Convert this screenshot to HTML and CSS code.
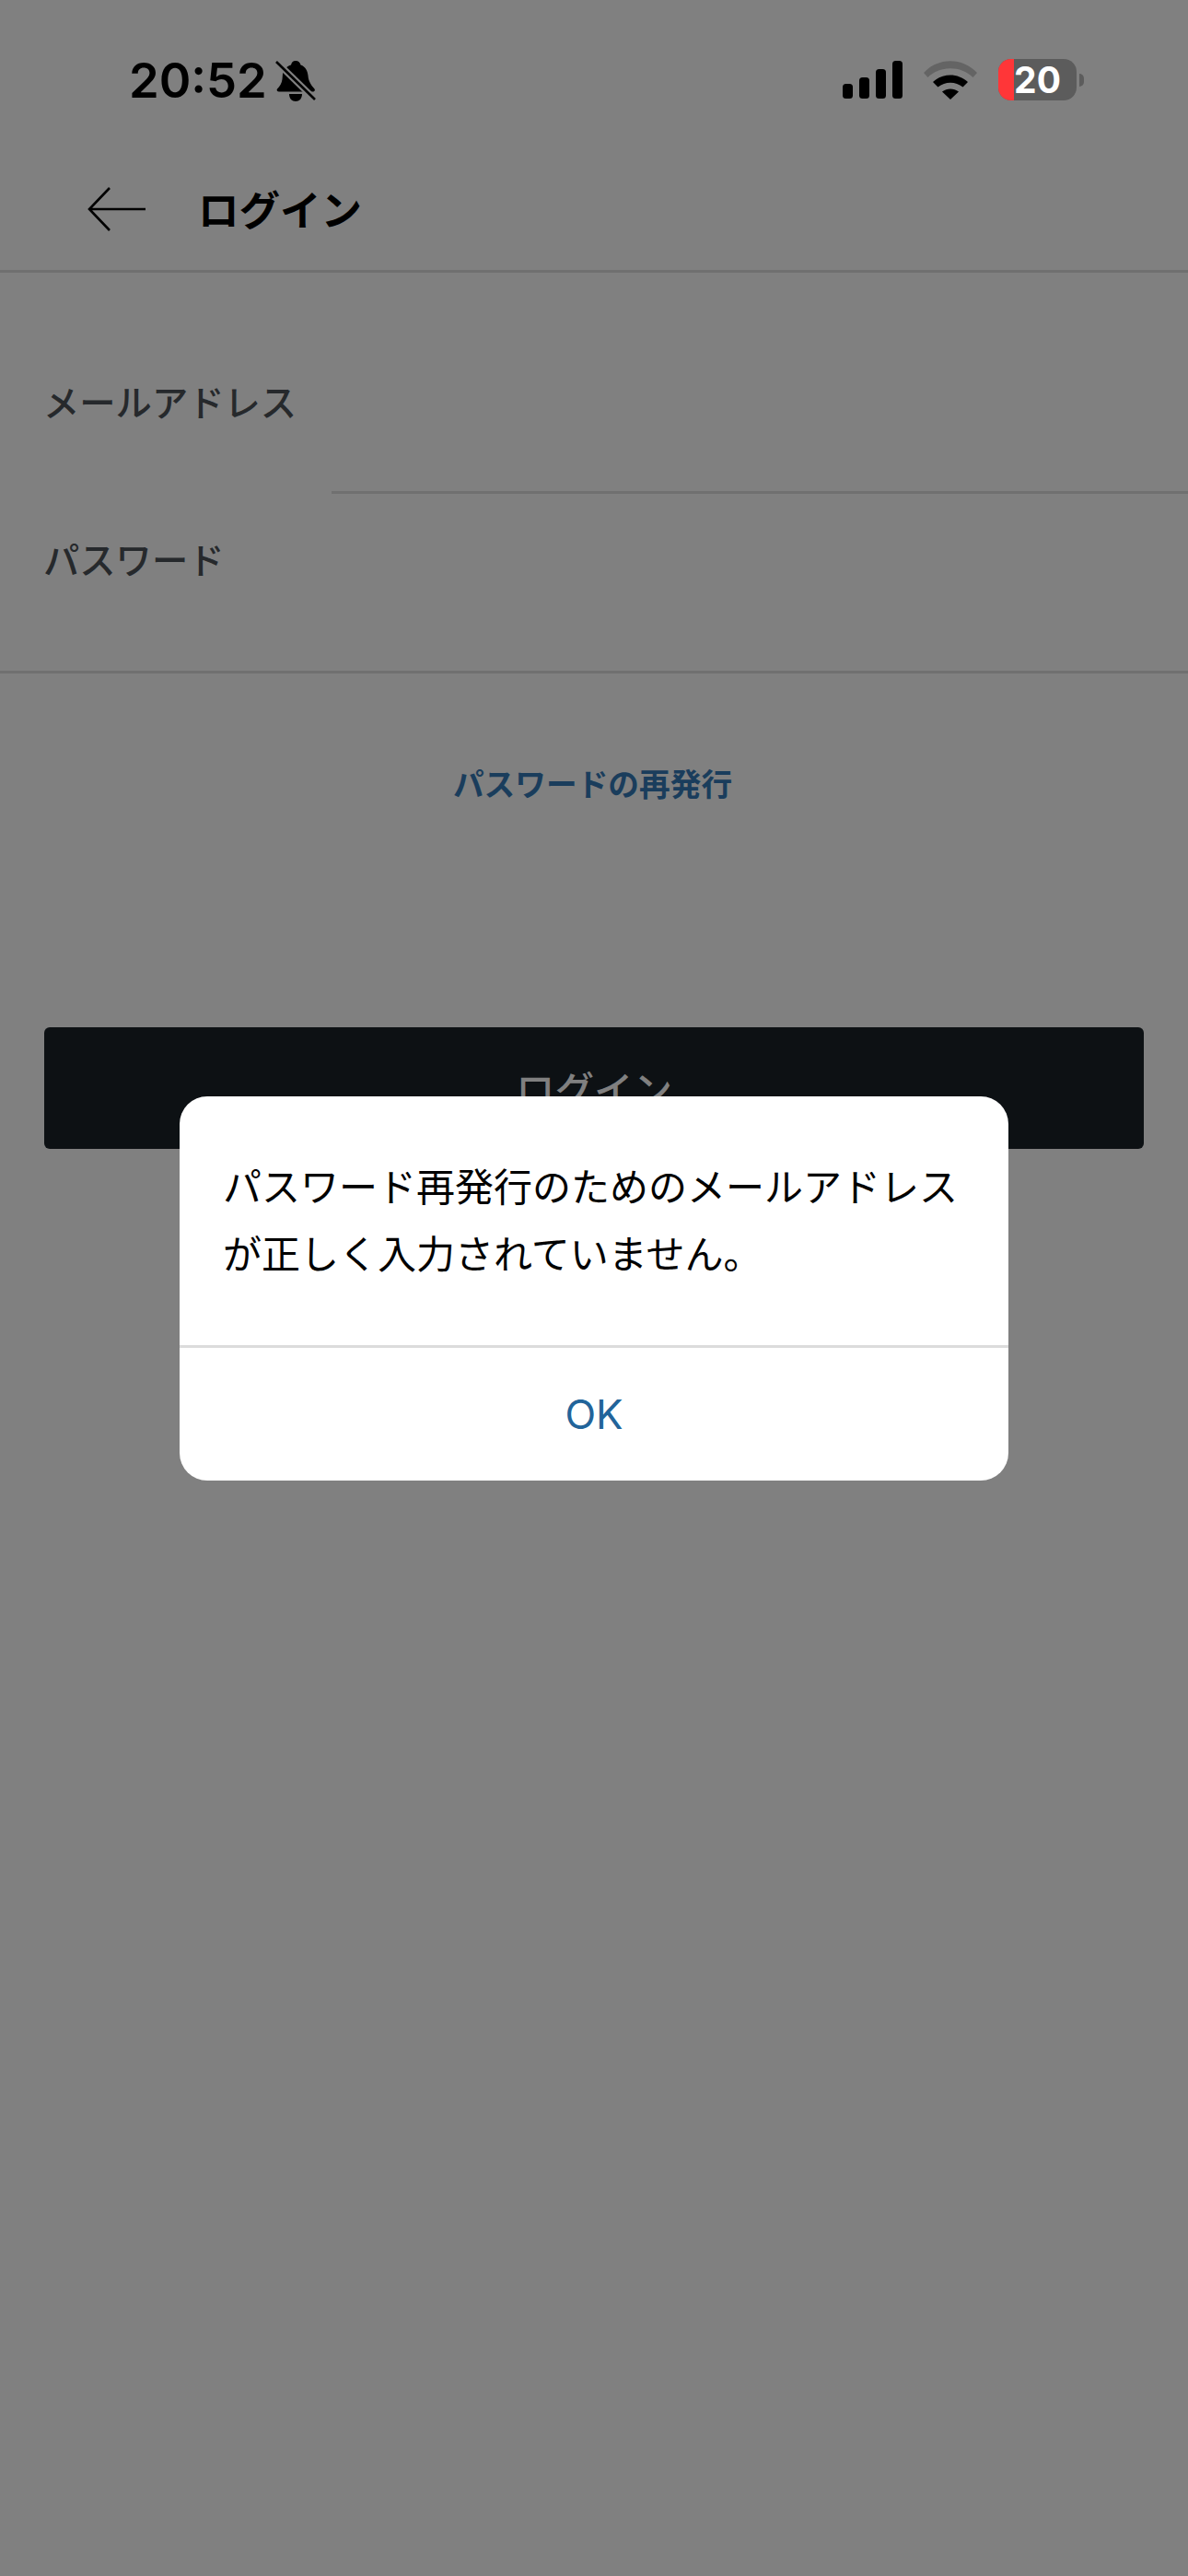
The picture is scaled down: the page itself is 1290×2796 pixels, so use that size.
FILE: index.html
```html
<!DOCTYPE html>
<html lang="ja">
<head>
    <meta charset="UTF-8">
    <meta name="viewport" content="width=device-width, initial-scale=1.0">
    <title>ログイン</title>
    <link rel="stylesheet" href="styles.css">
</head>
<body>
    <div class="screen">
        <div class="status-bar">
            <div class="status-left">
                <span class="time">20:52</span>
                <svg class="bell" width="44" height="46" viewBox="0 0 44 46">
                    <path d="M22 1c3 0 5 2 5.500 4.500C33 7.500 35 12 35.500 17c.5 6 3 10 7 14.500 1 1.500 0 3-1.500 3H4c-2 0-3-1.500-2-3 3-3 5-6.500 5.500-10.500L8 15c1-5 5-8.500 9-9.500C17.500 3 19 1 22 1z" fill="#000"/>
                    <path d="M15 37h14c0 5-3 8-7 8s-7-3-7-8z" fill="#000"/>
                    <path d="M1 2l42 41" stroke="#808080" stroke-width="7"/>
                    <path d="M1 2l42 41" stroke="#000" stroke-width="2.600"/>
                </svg>
            </div>
            <div class="status-right">
                <svg class="signal" width="65" height="41" viewBox="0 0 65 41">
                    <rect x="0" y="25" width="11" height="16" rx="3.500" fill="#000"/>
                    <rect x="18" y="18" width="11" height="23" rx="3.500" fill="#000"/>
                    <rect x="36" y="9" width="11" height="32" rx="3.500" fill="#000"/>
                    <rect x="54" y="0" width="11" height="41" rx="3.500" fill="#000"/>
                </svg>
                <svg class="wifi" width="58" height="42" viewBox="0 0 58 42">
                    <path d="M0 13C16-4 42-4 58 13l-4.500 5C40 5 18 5 4.500 18z" fill="#646464"/>
                    <path d="M10 23c11-10 27-10 38 0l-5.500 5.500c-8-6.500-19-6.500-27 0z" fill="#000"/>
                    <path d="M20 33.500c5.500-4 12.500-4 18 0L29 42z" fill="#000"/>
                </svg>
                <div class="battery">
                    <div class="battery-body">
                        <span class="battery-low"></span>
                        <span class="battery-text">20</span>
                    </div>
                    <span class="battery-nub"></span>
                </div>
            </div>
        </div>

        <div class="nav-bar">
            <svg class="back" width="66" height="50" viewBox="0 0 66 50">
                <path d="M64 25H4M25 2L3 25l22 23" fill="none" stroke="#000" stroke-width="2.600"/>
            </svg>
            <h1>ログイン</h1>
        </div>

        <div class="form">
            <div class="form-row row-email">
                <label>メールアドレス</label>
                <div class="input"></div>
            </div>
            <div class="form-row row-password">
                <label>パスワード</label>
            </div>
        </div>

        <a class="reissue" href="#">パスワードの再発行</a>

        <div class="login-wrap">
            <button class="login-button">ログイン</button>
        </div>
    </div>

    <div class="dialog-overlay">
        <div class="dialog">
            <p class="dialog-text">パスワード再発行のためのメールアドレスが正しく入力されていません。</p>
            <button class="dialog-ok">OK</button>
        </div>
    </div>
</body>
</html>
```

FILE: styles.css
```css
html, body {
    margin: 0;
    padding: 0;
    height: 100%;
    overflow: hidden;
}
body {
    background-color: #808080;
    font-family: "Inter", "Noto Sans CJK JP", sans-serif;
    position: relative;
}
.screen {
    display: flex;
    flex-direction: column;
}
.status-bar {
    height: 172px;
    display: flex;
    justify-content: space-between;
    align-items: flex-start;
    padding: 64px 113px 0 140px;
    box-sizing: border-box;
}
.status-left {
    display: flex;
    align-items: center;
    gap: 9px;
}
.time {
    font-size: 52.500px;
    font-weight: 600;
    line-height: 47px;
    color: #000000;
}
.status-right {
    display: flex;
    align-items: center;
    gap: 23px;
}
.battery {
    display: flex;
    align-items: center;
    gap: 3px;
}
.battery-body {
    position: relative;
    width: 85px;
    height: 45px;
    border-radius: 14px;
    background-color: #5c5c5c;
    overflow: hidden;
    display: flex;
    align-items: center;
    justify-content: center;
}
.battery-low {
    position: absolute;
    left: 0;
    top: 0;
    bottom: 0;
    width: 17px;
    background-color: #ff3638;
}
.battery-text {
    position: relative;
    font-size: 39px;
    font-weight: 700;
    color: #ffffff;
    line-height: 45px;
}
.battery-nub {
    width: 5px;
    height: 14px;
    border-radius: 0 5px 5px 0;
    background-color: #5c5c5c;
}
.nav-bar {
    height: 107px;
    border-bottom: 3px solid #707070;
    display: flex;
    align-items: center;
    padding-left: 94px;
    padding-bottom: 14px;
}
.back {
    margin-top: 3px;
}
.nav-bar h1 {
    margin: 0 0 0 55px;
    font-size: 44.500px;
    font-weight: 700;
    color: #000000;
}
.form {
    height: 432px;
    border-bottom: 3px solid #707070;
    display: flex;
    flex-direction: column;
}
.form-row {
    display: flex;
    align-items: center;
    box-sizing: border-box;
    color: #26292c;
    font-size: 39.300px;
    font-weight: 500;
    padding-left: 47px;
}
.form-row label {
    width: 312px;
    white-space: nowrap;
}
.row-email {
    height: 240px;
    padding-top: 37px;
    position: relative;
}
.input {
    position: absolute;
    left: 360px;
    right: 0;
    bottom: 0;
    border-bottom: 3px solid #707070;
}
.row-password {
    height: 192px;
    padding-bottom: 54px;
}
.reissue {
    display: block;
    margin-top: 96px;
    padding-right: 3px;
    text-align: center;
    font-size: 33.700px;
    font-weight: 700;
    line-height: 50px;
    color: #1a3d5c;
    text-decoration: none;
}
.login-wrap {
    padding: 0 48px;
    margin-top: 238px;
}
.login-button {
    display: block;
    width: 100%;
    height: 132px;
    background-color: #0d1114;
    color: #808080;
    font-family: inherit;
    font-size: 42.500px;
    font-weight: 500;
    border: none;
    border-radius: 6px;
    padding: 0 0 2px;
}
.dialog-overlay {
    position: absolute;
    left: 195px;
    top: 1190px;
    width: 900px;
}
.dialog {
    background-color: #ffffff;
    border-radius: 30px;
    overflow: hidden;
}
.dialog-text {
    margin: 0;
    height: 270px;
    box-sizing: border-box;
    padding: 62px 47px 0;
    font-size: 42px;
    line-height: 73px;
    color: #000000;
}
.dialog-ok {
    display: block;
    width: 100%;
    height: 147px;
    background: none;
    border: none;
    border-top: 3px solid #dcdcdc;
    color: #22649a;
    font-family: inherit;
    font-size: 44px;
    padding: 0;
}
```
